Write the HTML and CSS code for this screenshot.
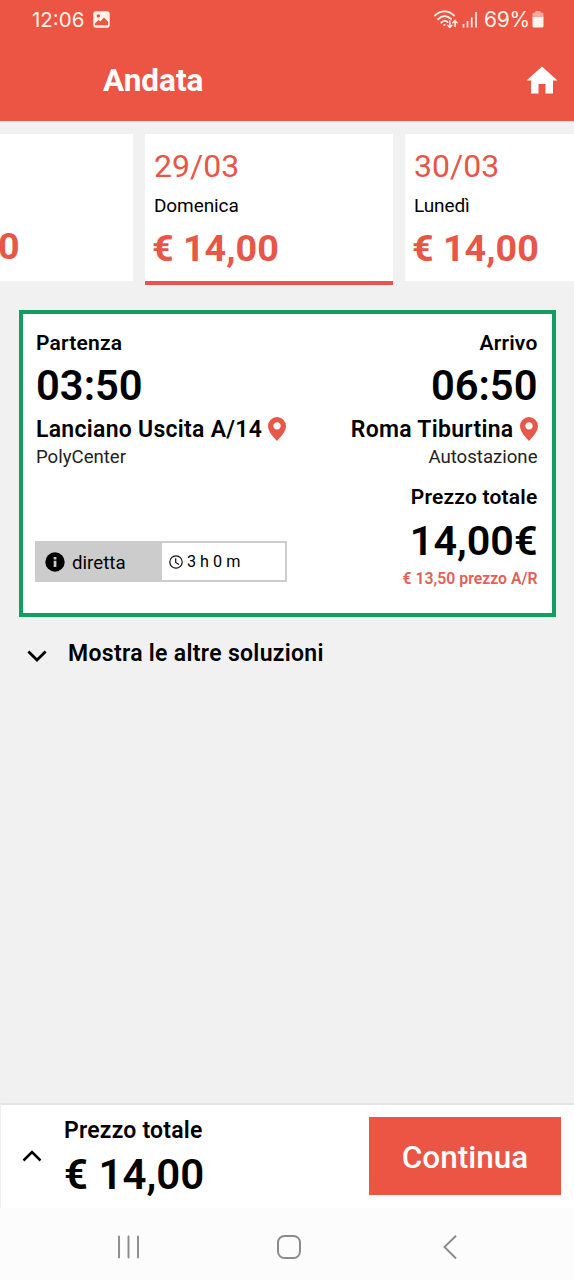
FILE: index.html
```html
<!DOCTYPE html>
<html lang="it">
<head>
<meta charset="utf-8">
<title>Andata</title>
<link rel="stylesheet" href="styles.css">
</head>
<body>
<div class="screen">
  <header class="header">
    <div class="status">
      <span class="clock">12:06</span>
      <svg class="gallery" width="17" height="17" viewBox="0 0 17 17"><path fill="#fff3e6" fill-rule="evenodd" d="M3 .3h11A2.700 2.700 0 0 1 16.700 3v11A2.700 2.700 0 0 1 14 16.700H3A2.700 2.700 0 0 1 .3 14V3A2.700 2.700 0 0 1 3 .3ZM2 14.200h13v-3.400L11 6.600 7.300 10.600 5.400 9 2 12.400ZM5.300 3.200a1.700 1.700 0 1 0 .01 0Z"/></svg>
      <span class="spacer"></span>
      <svg class="wifi" width="24" height="19" viewBox="0 0 24 19" fill="none" stroke="#fff3e6" stroke-width="1.800" stroke-linecap="round"><path d="M1 5.500C6.500.1 14.500.1 20 5.500M4 9.300c4-4 9-4 13-.4M7.300 12.600c2-2 4.300-2.100 6.300-.5"/><circle cx="10.500" cy="15" r="1.100" fill="#fff3e6" stroke="none"/><path stroke-width="1.500" d="M15.800 11v6M13.700 15.200l2.100 2.200 2.100-2.200M21 16.500v-5.700M18.900 12.700l2.100-2.200 2.100 2.200"/></svg>
      <svg class="signal" width="16" height="17" viewBox="0 0 16 17" stroke="#fff3e6" stroke-width="1.700"><path d="M1.500 13v3.500M5.500 10v6.500M9.700 6.500v10M14 1v15.500"/></svg>
      <span class="percent">69%</span>
      <svg class="battery" width="12" height="17" viewBox="0 0 12 17"><path fill="#f9aa9c" d="M3.500 0h5v1.500h1.500A1.500 1.500 0 0 1 11.500 3v4H.5V3A1.500 1.500 0 0 1 2 1.500h1.500Z"/><path fill="#fff3ee" d="M.5 6h11v9a1.500 1.500 0 0 1-1.500 1.500H2A1.500 1.500 0 0 1 .5 15Z"/></svg>
    </div>
    <div class="titlebar">
      <h1 class="title">Andata</h1>
      <svg class="home" width="32" height="28" viewBox="0 0 32 28"><path fill="#fff" d="M16 .5 31.500 14.500H27V27.500h-7.500V18h-7v9.500H5V14.500H.5Z"/></svg>
    </div>
  </header>
  <nav class="days">
    <div class="day day-previous"><div class="price">0</div></div>
    <div class="day day-active"><div class="date">29/03</div><div class="weekday">Domenica</div><div class="price">€ 14,00</div></div>
    <div class="day"><div class="date">30/03</div><div class="weekday">Lunedì</div><div class="price">€ 14,00</div></div>
  </nav>
  <main class="content">
    <section class="card">
      <div class="column">
        <div class="label">Partenza</div>
        <div class="time">03:50</div>
        <div class="place"><span>Lanciano Uscita A/14</span><svg class="pin" width="18" height="24" viewBox="0 0 18 24"><path fill="#e8584a" fill-rule="evenodd" d="M9 0a9 9 0 0 1 9 9c0 5.500-5 10.500-9 15C5 19.500 0 14.500 0 9a9 9 0 0 1 9-9Zm0 5.200a3.700 3.700 0 1 0 .01 0Z"/></svg></div>
        <div class="stop">PolyCenter</div>
        <div class="trip">
          <div class="direct"><svg width="20" height="20" viewBox="0 0 20 20"><circle cx="10" cy="10" r="9.700"/><path fill="#ccc" d="M8.700 8.800h2.700V15H8.700ZM8.700 5h2.700v2.400H8.700Z"/></svg><span class="direct-text">diretta</span></div>
          <div class="duration"><svg width="14" height="14" viewBox="0 0 14 14" fill="none" stroke="#111" stroke-width="1.200"><circle cx="7" cy="7" r="6.200"/><path d="M6.700 3.200v4.200l3.300 2"/></svg><span>3 h 0 m</span></div>
        </div>
      </div>
      <div class="column column-end">
        <div class="label">Arrivo</div>
        <div class="time">06:50</div>
        <div class="place"><span>Roma Tiburtina</span><svg class="pin" width="18" height="24" viewBox="0 0 18 24"><path fill="#e8584a" fill-rule="evenodd" d="M9 0a9 9 0 0 1 9 9c0 5.500-5 10.500-9 15C5 19.500 0 14.500 0 9a9 9 0 0 1 9-9Zm0 5.200a3.700 3.700 0 1 0 .01 0Z"/></svg></div>
        <div class="stop">Autostazione</div>
        <div class="label total-label">Prezzo totale</div>
        <div class="total">14,00€</div>
        <div class="return-price">€ 13,50 prezzo A/R</div>
      </div>
    </section>
    <div class="more"><svg width="20" height="13" viewBox="0 0 20 13" fill="none" stroke="#000" stroke-width="2.800"><path d="M1.400 1.500 10 10l8.600-8.500"/></svg><span>Mostra le altre soluzioni</span></div>
  </main>
  <footer class="summary">
    <svg class="expand" width="20" height="13" viewBox="0 0 20 13" fill="none" stroke="#000" stroke-width="2.500"><path d="M1.500 11.500 10 3l8.500 8.500"/></svg>
    <div class="sum"><div class="sum-label">Prezzo totale</div><div class="sum-price">€ 14,00</div></div>
    <button class="continue">Continua</button>
  </footer>
  <div class="system">
    <svg width="24" height="26" viewBox="0 0 24 26" stroke="#8b8b8b" stroke-width="1.900" stroke-linecap="round"><path d="M2 2.500v21M11.500 2.500v21M21 2.500v21"/></svg>
    <svg width="26" height="26" viewBox="0 0 26 26" fill="none" stroke="#8b8b8b" stroke-width="2"><rect x="2" y="2" width="22" height="22" rx="6.500"/></svg>
    <svg class="back" width="16" height="26" viewBox="0 0 16 26" fill="none" stroke="#8b8b8b" stroke-width="1.900"><path d="M14 1.800 2.500 13 14 24.500"/></svg>
  </div>
</div>
</body>
</html>
```
FILE: styles.css
```css
* { box-sizing: border-box; }
body { margin: 0; font-family: Roboto, "Liberation Sans", sans-serif; color: #000; background: #f1f1f1; }
svg { display: block; flex: none; }
.screen { display: flex; flex-direction: column; width: 574px; height: 1280px; overflow: hidden; white-space: nowrap; }

.header { height: 121px; flex: none; background: #ec5444; }
.status { display: flex; align-items: center; height: 38px; padding: 0 30px 0 32px; font-family: Inter, sans-serif; font-size: 21px; color: #fff3e6; }
.clock { width: 52px; font-size: 20.5px; }
.gallery { margin-left: 9px; }
.spacer { flex: 1; }
.signal { margin: 0 6px 0 4px; }
.percent { width: 46px; letter-spacing: -.3px; }
.battery { margin-left: 2px; }
.titlebar { display: flex; justify-content: space-between; align-items: center; height: 83px; padding: 1px 16px 1px 103px; }
.title { margin: 2px 0 0; font-size: 31.5px; line-height: 40px; font-weight: 700; color: #fff; }

.days { display: flex; gap: 12px; margin-top: 13px; height: 151px; flex: none; }
.day { flex: none; width: 248px; height: 147px; padding: 15px 9px 0; background: #fff; }
.day-previous { width: 133px; padding: 82px 0 0; }
.day-active { height: 151px; border-bottom: 4px solid #e75647; }
.date { font-size: 32px; line-height: 34px; color: #e75647; }
.weekday { margin-top: 11px; font-size: 19px; line-height: 24px; letter-spacing: -.1px; }
.price { margin: 9px 0 0 -2px; font-size: 37.7px; line-height: 42px; font-weight: 700; color: #e75647; }

.content { flex: 1; padding: 25px 18.500px 0 19px; }
.card { display: flex; justify-content: space-between; height: 307px; padding: 15px 14px 0 13px; border: 4px solid #139d60; background: #fff; }
.column { display: flex; flex-direction: column; align-items: flex-start; }
.column-end { align-items: flex-end; }
.label { font-size: 21px; line-height: 28px; font-weight: 600; letter-spacing: .2px; }
.time, .total { font-size: 41.7px; line-height: 50px; font-weight: 600; margin-top: 4px; }
.place { display: flex; align-items: center; gap: 6px; height: 28px; margin-top: 4px; font-size: 23px; font-weight: 600; letter-spacing: .28px; }
.stop { margin-top: 1px; font-size: 18.6px; line-height: 26px; color: #222; }
.trip { display: flex; width: 252px; height: 41px; margin: 71px 0 0 -1px; border: 2px solid #ccc; }
.direct { display: flex; align-items: center; gap: 7px; width: 125px; padding-left: 8px; background: #ccc; font-size: 18.7px; }
.direct-text { margin-top: 2px; }
.duration { display: flex; align-items: center; gap: 4px; padding-left: 7px; font-size: 16.2px; }
.total-label { margin-top: 13px; }
.total { margin-top: 5px; font-size: 41.3px; }
.return-price { margin-top: 2px; font-size: 15.8px; line-height: 22px; font-weight: 600; color: #e36054; }
.more { display: flex; align-items: center; gap: 21px; height: 30px; margin: 21px 0 0 8px; font-size: 23px; font-weight: 600; letter-spacing: .31px; }
.more svg { margin-top: 6px; }

.summary { display: flex; height: 105px; flex: none; padding: 0 13px 0 21px; border-top: 2px solid #e4e4e4; border-left: 1px solid #eee; background: #fff; }
.expand { margin-top: 44px; }
.sum { flex: 1; padding: 12px 0 0 22px; font-weight: 600; }
.sum-label { font-size: 23px; line-height: 28px; letter-spacing: .2px; }
.sum-price { margin-top: 5px; font-size: 42px; line-height: 50px; }
.continue { width: 192px; height: 78px; margin-top: 12px; padding: 3px 0 0; border: 0; background: #ec5444; font: 500 31.5px/75px Roboto, sans-serif; color: #fff; }
.system { display: flex; gap: 135px; height: 72px; flex: none; padding: 26px 0 0 117px; background: #fcfcfc; }
.back { margin-left: 5px; }
```
